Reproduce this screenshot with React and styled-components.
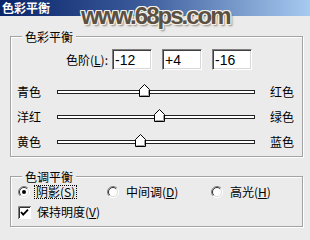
import React from 'react';
import styled, { createGlobalStyle } from 'styled-components';

const Global = createGlobalStyle`
  html, body { margin: 0; padding: 0; background: #ebebeb; }
  body {
    font-family: "Noto Sans CJK SC", "Liberation Sans", sans-serif;
    font-size: 12px;
    color: #000;
  }
`;

const Window = styled.div`
  position: relative;
  width: 310px;
  height: 240px;
  background: #ebebeb;
  overflow: hidden;
`;

const TitleBar = styled.div`
  height: 16px;
  padding-left: 2px;
  background: linear-gradient(to right, #0a246a 0%, #3a5a9a 45%, #a6caf0 100%);
  color: #fff;
  font-weight: bold;
  font-size: 12px;
  line-height: 16px;
`;

const Watermark = styled.div`
  position: absolute;
  left: 81px;
  top: 3px;
  font-family: "Liberation Sans", Arial, sans-serif;
  font-weight: bold;
  font-size: 24px;
  letter-spacing: -2px;
  line-height: 26px;
  color: #5a5044;
  text-shadow:
    1px 0 0 #f4efe4, -1px 0 0 #f4efe4, 0 1px 0 #f4efe4, 0 -1px 0 #f4efe4,
    1px 1px 0 #f4efe4, -1px -1px 0 #f4efe4, 1px -1px 0 #f4efe4, -1px 1px 0 #f4efe4,
    2px 2px 2px rgba(80, 70, 60, 0.6);
`;

const Body = styled.div`
  display: flex;
  flex-direction: column;
  gap: 13px;
  padding: 14px 0 0 10px;
`;

const Group = styled.fieldset`
  box-sizing: border-box;
  width: 293px;
  margin: 0;
  padding: 0 0 ${p => p.$pb}px 0;
  border: 1px solid #a3a3a3;
  box-shadow: inset 1px 1px 0 #fff, 1px 1px 0 #fff;
  min-inline-size: 0;
`;

const Legend = styled.legend`
  margin-left: 11px;
  padding: 0 3px;
  line-height: 13px;
  background: #ebebeb;
`;

const LevelRow = styled.div`
  display: flex;
  align-items: center;
  gap: 10px;
  margin-top: 6px;
`;

const LevelLabel = styled.span`
  width: 97px;
  margin-right: -6px;
  text-align: right;
`;

const NumBox = styled.div`
  box-sizing: border-box;
  width: 40px;
  height: 21px;
  padding: 1px 0 0 2px;
  background: #fff;
  border-top: 1px solid #808080;
  border-left: 1px solid #808080;
  border-right: 1px solid #fff;
  border-bottom: 1px solid #fff;
  box-shadow: inset 1px 1px 0 #404040, inset -1px -1px 0 #d8d8d8;
  font-family: "Liberation Sans", Arial, sans-serif;
  font-size: 14px;
  line-height: 18px;
`;

const Sliders = styled.div`
  margin-top: 9px;
  padding-left: 6px;
`;

const SliderRow = styled.div`
  display: grid;
  grid-template-columns: 40px 198px auto;
  align-items: center;
  height: 25px;
`;

const SideLabel = styled.span`
  margin-left: ${p => p.$ml || 0}px;
`;

const Track = styled.div`
  position: relative;
  box-sizing: border-box;
  height: 4px;
  background: #fff;
  border: 1px solid #222;
`;

const Thumb = styled.svg`
  position: absolute;
  top: -7px;
  width: 11px;
  height: 13px;
`;

const Options = styled.div`
  display: flex;
  flex-direction: column;
  gap: 6px;
  padding: 2px 0 0 7px;
`;

const RadioRow = styled.div`
  display: grid;
  grid-template-columns: 89px 104px auto;
  height: 14px;
  align-items: center;
`;

const Choice = styled.label`
  display: flex;
  align-items: center;
  gap: ${p => p.$gap || 4}px;
  height: 14px;
  line-height: 14px;
`;

const ChoiceText = styled.span`
  padding: 0 1px;
  border: 1px dotted ${p => (p.$focus ? '#000' : 'transparent')};
  line-height: 12px;
`;

const Radio = ({ checked }) => (
  <svg width="12" height="12" viewBox="0 0 12 12">
    <circle cx="6" cy="6" r="4.5" fill="#fff" />
    <path d="M2.1 9.9 A5.5 5.5 0 0 1 9.9 2.1" fill="none" stroke="#808080" />
    <path d="M9.9 2.1 A5.5 5.5 0 0 1 2.1 9.9" fill="none" stroke="#fff" />
    <path d="M2.8 9.2 A4.5 4.5 0 0 1 9.2 2.8" fill="none" stroke="#303030" />
    <path d="M9.2 2.8 A4.5 4.5 0 0 1 2.8 9.2" fill="none" stroke="#dcdcdc" />
    {checked && <circle cx="6" cy="6" r="2" fill="#000" />}
  </svg>
);

const Check = () => (
  <svg width="13" height="13" viewBox="0 0 13 13">
    <rect x="0" y="0" width="13" height="13" fill="#fff" />
    <path d="M0.5 13 V0.5 H13" fill="none" stroke="#808080" />
    <path d="M1.5 12 V1.5 H12" fill="none" stroke="#303030" />
    <path d="M3 6 L5.2 8.6 L10 3.6" fill="none" stroke="#000" strokeWidth="1.8" />
  </svg>
);

const sliders = [
  { l: '青色', r: '红色', v: -12 },
  { l: '洋红', r: '绿色', v: 4 },
  { l: '黄色', r: '蓝色', v: -16 },
];

export default function App() {
  return (
    <Window>
      <Global />
      <TitleBar>色彩平衡</TitleBar>
      <Watermark>www.68ps.com</Watermark>
      <Body>
        <Group $pb={2}>
          <Legend>色彩平衡</Legend>
          <LevelRow>
            <LevelLabel>色阶(<u>L</u>):</LevelLabel>
            <NumBox>-12</NumBox>
            <NumBox>+4</NumBox>
            <NumBox>-16</NumBox>
          </LevelRow>
          <Sliders>
            {sliders.map(s => (
              <SliderRow key={s.l}>
                <SideLabel>{s.l}</SideLabel>
                <Track>
                  <Thumb viewBox="0 0 11 13" style={{ left: ((s.v + 100) / 200) * 198 - 6.5 }}>
                    <path d="M0.5 5.5 L5.5 0.5 L10.5 5.5 V12.5 H0.5 Z" fill="#fff" stroke="#000" />
                    <path d="M9.5 6 V11.5 H1.5" fill="none" stroke="#a0a0a0" />
                  </Thumb>
                </Track>
                <SideLabel $ml={15}>{s.r}</SideLabel>
              </SliderRow>
            ))}
          </Sliders>
        </Group>
        <Group $pb={7}>
          <Legend>色调平衡</Legend>
          <Options>
            <RadioRow>
              <Choice $gap={4}>
                <Radio checked />
                <ChoiceText $focus>阴影(<u>S</u>)</ChoiceText>
              </Choice>
              <Choice $gap={5}>
                <Radio />
                <ChoiceText>中间调(<u>D</u>)</ChoiceText>
              </Choice>
              <Choice $gap={5}>
                <Radio />
                <ChoiceText>高光(<u>H</u>)</ChoiceText>
              </Choice>
            </RadioRow>
            <Choice $gap={4}>
              <Check />
              <ChoiceText>保持明度(<u>V</u>)</ChoiceText>
            </Choice>
          </Options>
        </Group>
      </Body>
    </Window>
  );
}
